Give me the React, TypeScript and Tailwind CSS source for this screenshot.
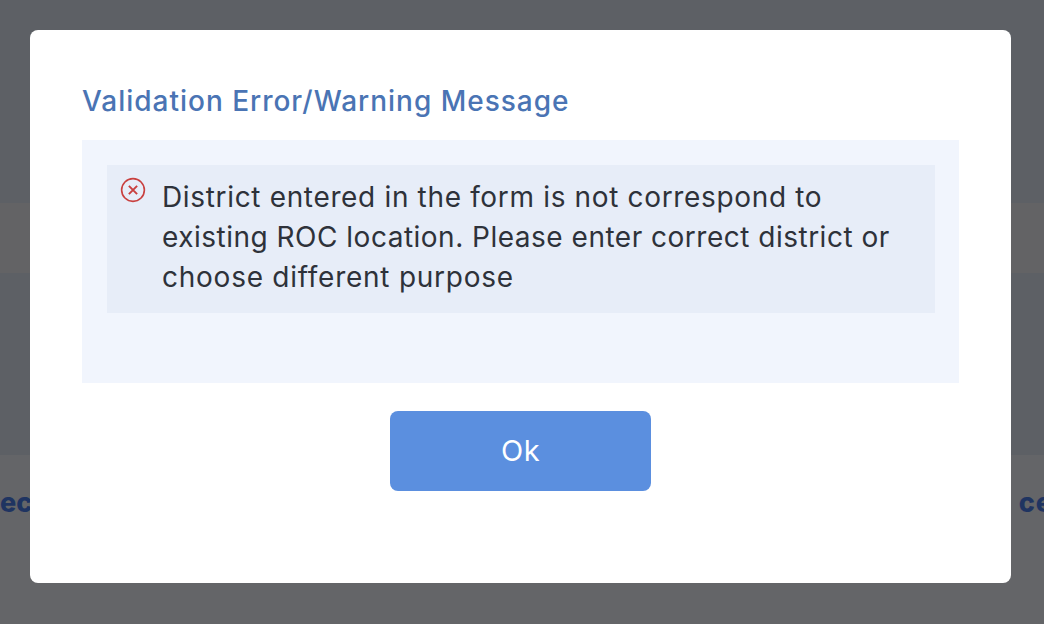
const FONT = "font-['Inter','Noto_Sans',sans-serif]";

export default function App() {
  return (
    <main className={`relative h-[624px] w-[1044px] overflow-hidden bg-[#646568] ${FONT}`}>
      {/* page behind the overlay */}
      <div className="h-[203px] bg-[#5d6065]" />
      <div className="h-[70px] bg-[#636365]" />
      <div className="h-[182px] bg-[#5d6065]" />
      <div className="flex justify-between pt-[30px] text-[27px] leading-[36px] font-extrabold text-[#1f3461]">
        <span>ec</span>
        <span className="mr-[-9px] tracking-[1px]">/ ce</span>
      </div>

      {/* modal */}
      <div className="absolute top-[30px] left-[30px] flex h-[553px] w-[981px] flex-col rounded-[8px] bg-white px-[52px] pt-[52px]">
        <h2 className="h-[38px] text-[28px] leading-[38px] font-medium tracking-[0.98px] text-[#4a74b4]">
          Validation Error/Warning Message
        </h2>
        <div className="mt-[20px] h-[243px] bg-[#f1f5fd] pt-[25px] pr-[24px] pl-[25px]">
          <div className="flex h-[148px] gap-[16px] bg-[#e7edf8] pt-[12px] pl-[13px]">
            <svg viewBox="0 0 24 24" className="h-[26px] w-[26px] shrink-0 fill-none stroke-[#c9403f]" strokeWidth="1.5">
              <circle cx="12" cy="12" r="10.5" />
              <path d="M8.2 8.2l7.6 7.6M15.8 8.2l-7.6 7.6" strokeWidth="1.8" />
            </svg>
            <p className="text-[28px] leading-[40px] text-[#2e323a]">
              <span className="tracking-[0.66px]">District entered in the form is not correspond to</span>
              <br />
              <span className="tracking-[0.5px]">existing ROC location. Please enter correct district or</span>
              <br />
              <span className="tracking-[0.75px]">choose different purpose</span>
            </p>
          </div>
        </div>
        <button className="mx-auto mt-[28px] h-[80px] w-[261px] rounded-[8px] bg-[#5b8fdf] text-[29px] tracking-[0.5px] text-white">
          Ok
        </button>
      </div>
    </main>
  );
}
